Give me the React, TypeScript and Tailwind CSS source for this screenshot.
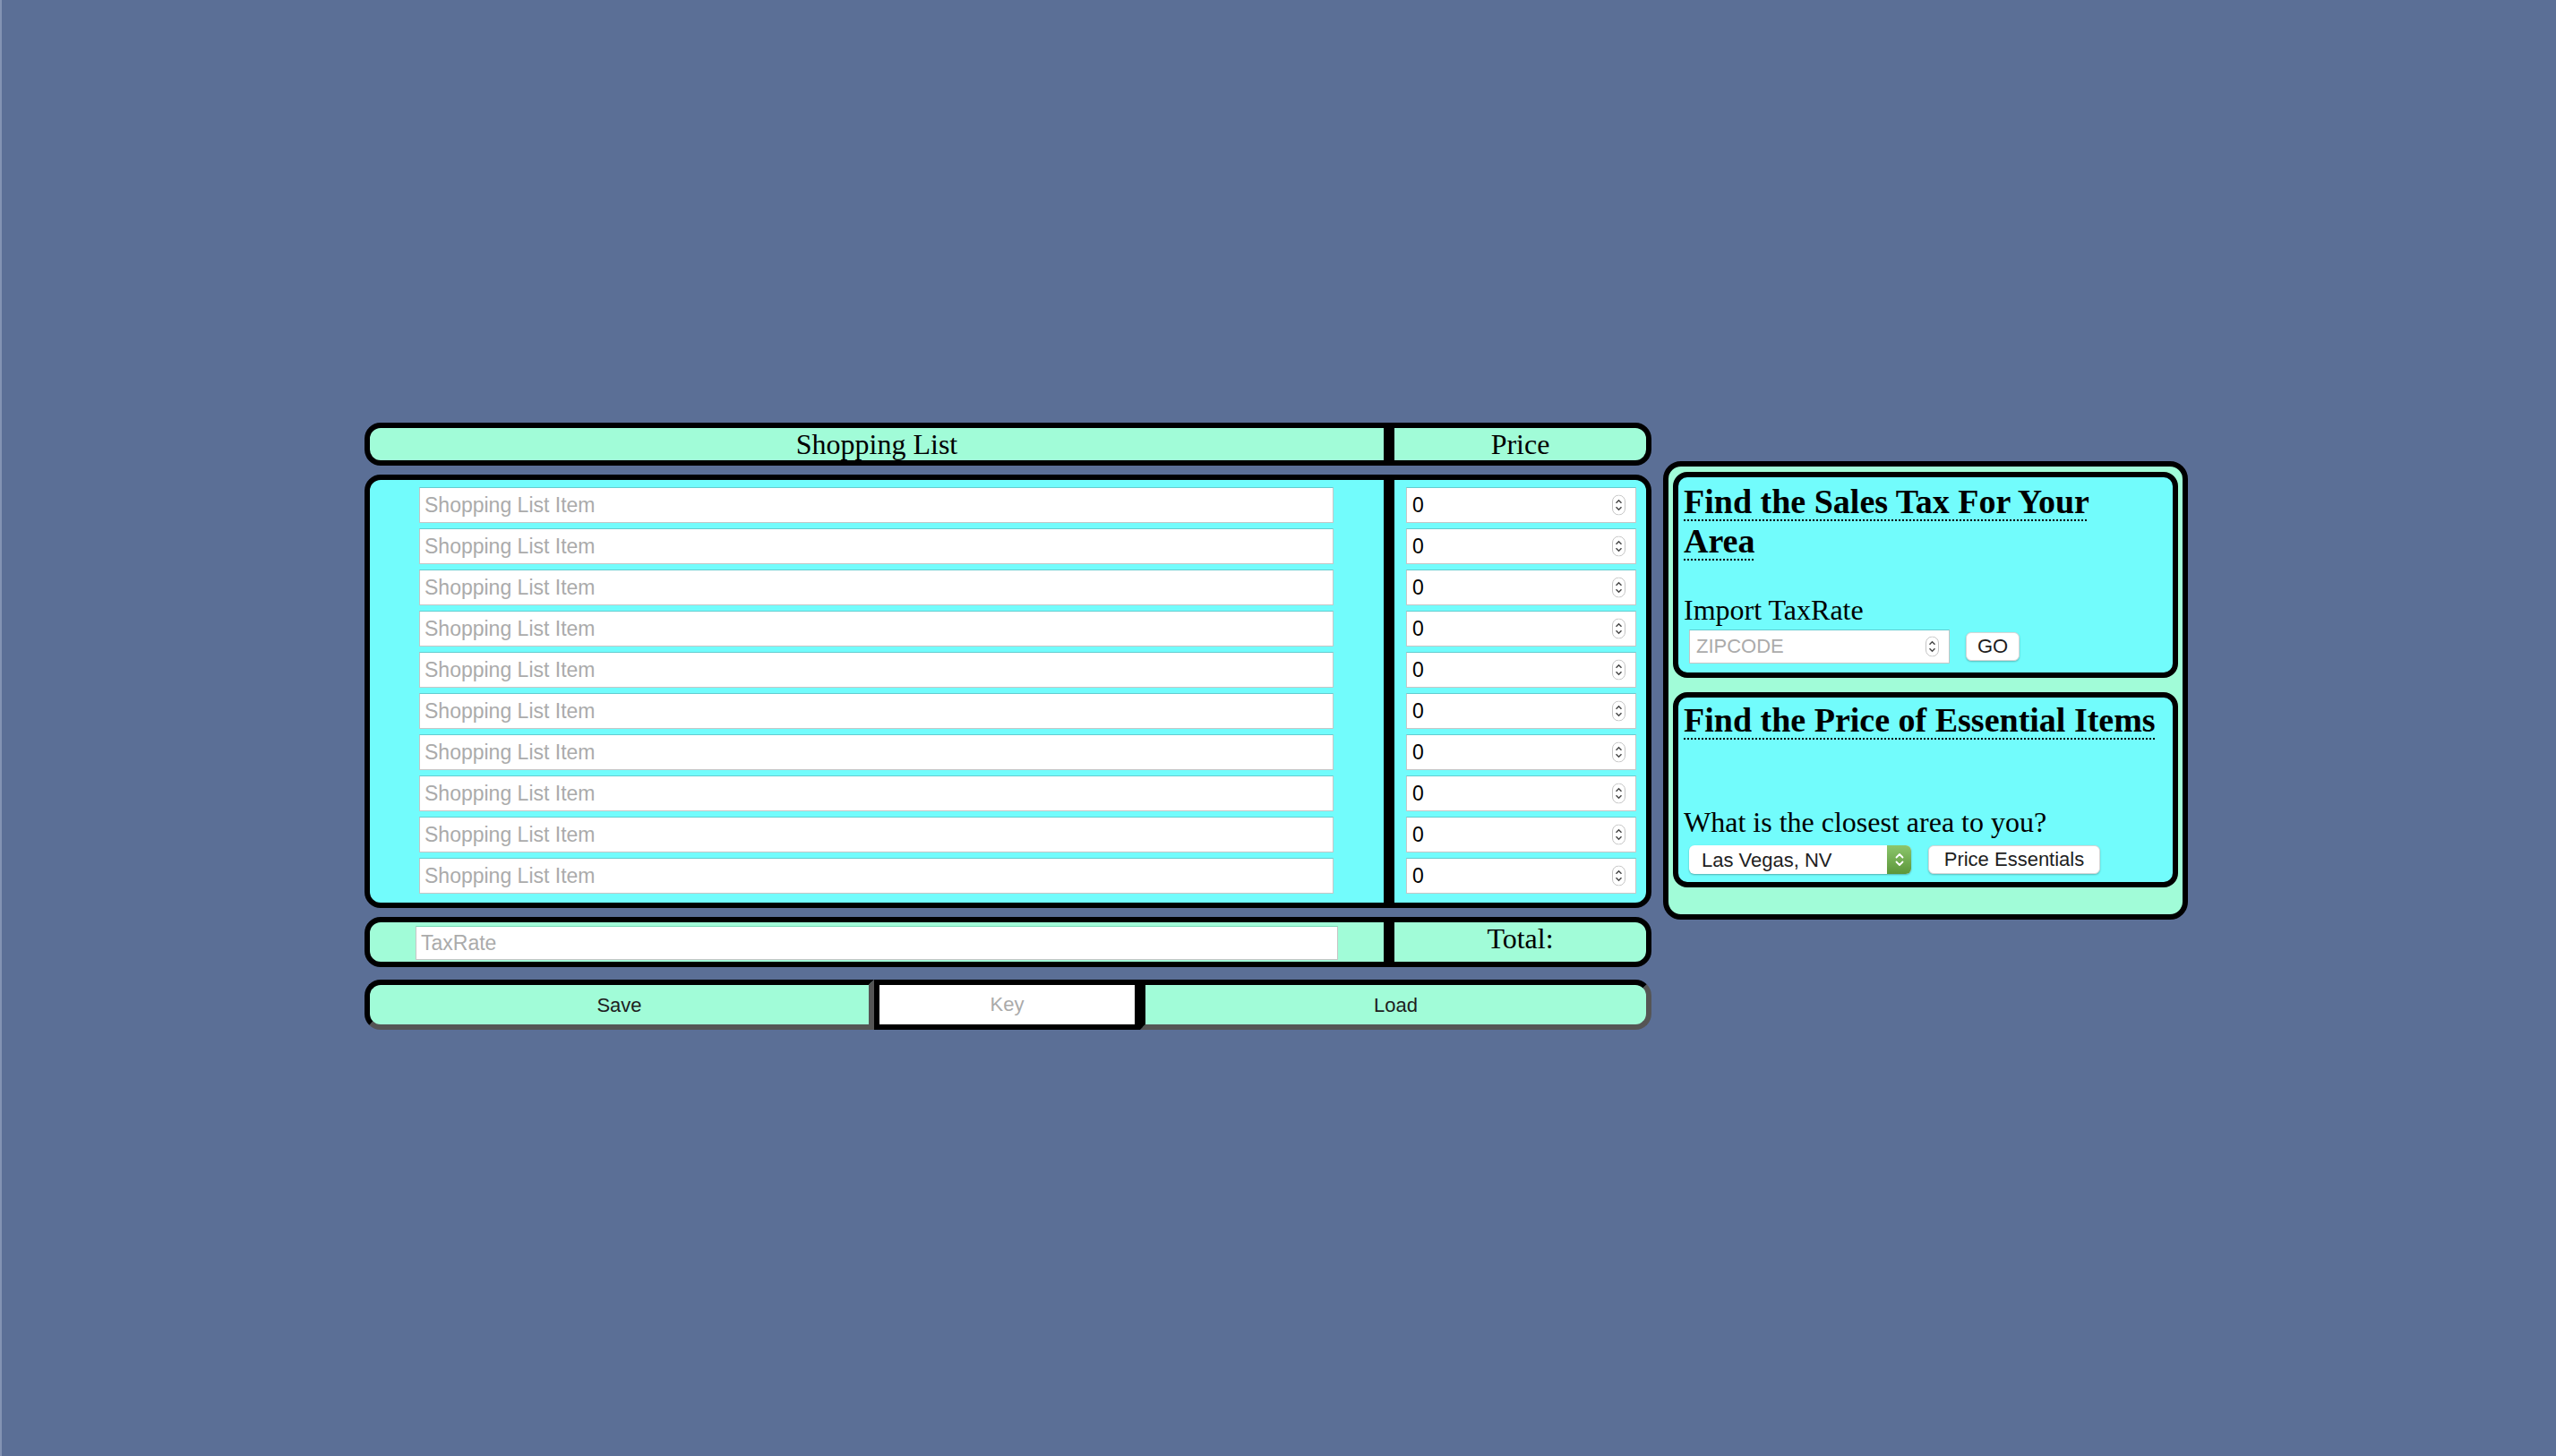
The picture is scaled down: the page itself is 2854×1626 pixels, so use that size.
import React from "react";

function Spinner() {
  return (
    <svg
      width="15"
      height="23"
      viewBox="0 0 15 23"
      className="pointer-events-none absolute right-[12px] top-1/2 -translate-y-1/2"
    >
      <rect x="0.5" y="0.5" width="14" height="22" rx="7" fill="#ffffff" stroke="#c4c4c4" />
      <path d="M4.5 9.2 L7.5 6.2 L10.5 9.2" stroke="#4a4a4a" strokeWidth="1.5" fill="none" />
      <path d="M4.5 13.8 L7.5 16.8 L10.5 13.8" stroke="#4a4a4a" strokeWidth="1.5" fill="none" />
    </svg>
  );
}

const rows = Array.from({ length: 10 }, (_, i) => i);

export default function App() {
  return (
    <div className="min-h-screen w-full bg-[#5b6f96] border-l-2 border-[#8393b3] pl-[405px] pt-[472px] font-['Liberation_Sans',Arial,sans-serif]">
      <div className="flex items-start gap-[13px]">
        {/* Left column */}
        <div className="flex w-[1437px] flex-col">
          {/* Header */}
          <div className="flex h-[48px]">
            <div className="w-[1144px] rounded-l-[18px] border-[6px] border-black bg-[#a1fcd8] text-center font-['Liberation_Serif',serif] text-[32px] leading-[36px] text-black">
              Shopping List
            </div>
            <div className="flex-1 rounded-r-[18px] border-[6px] border-black bg-[#a1fcd8] text-center font-['Liberation_Serif',serif] text-[32px] leading-[36px] text-black">
              Price
            </div>
          </div>

          {/* Body */}
          <div className="mt-[10px] flex h-[484px]">
            <div className="w-[1144px] rounded-l-[18px] border-[6px] border-black bg-[#72fcfc] pl-[55px] pr-[56px] pt-[8px]">
              <div className="flex flex-col gap-[6px]">
                {rows.map((i) => (
                  <input
                    key={i}
                    type="text"
                    placeholder="Shopping List Item"
                    className="block h-[40px] w-full border border-[#c6c6c6] border-t-[#63cdd0] bg-white pl-[5px] text-[23px] text-black outline-none placeholder:text-[#ababab]"
                  />
                ))}
              </div>
            </div>
            <div className="flex-1 rounded-r-[18px] border-[6px] border-black bg-[#72fcfc] pl-[13px] pr-[11px] pt-[8px]">
              <div className="flex flex-col gap-[6px]">
                {rows.map((i) => (
                  <div key={i} className="relative h-[40px]">
                    <input
                      type="text"
                      defaultValue="0"
                      className="block h-full w-full border border-[#c6c6c6] border-t-[#63cdd0] bg-white pl-[6px] text-[23px] text-black outline-none"
                    />
                    <Spinner />
                  </div>
                ))}
              </div>
            </div>
          </div>

          {/* Tax row */}
          <div className="mt-[10px] flex h-[56px]">
            <div className="w-[1144px] rounded-l-[18px] border-[6px] border-black bg-[#a1fcd8] pl-[51px] pt-[4px]">
              <input
                type="text"
                placeholder="TaxRate"
                className="block h-[38px] w-[1030px] border border-[#c6c6c6] border-t-[#74d9b5] bg-white pl-[5px] text-[23px] text-black outline-none placeholder:text-[#ababab]"
              />
            </div>
            <div className="flex-1 rounded-r-[18px] border-[6px] border-black bg-[#a1fcd8] text-center font-['Liberation_Serif',serif] text-[32px] leading-[36px] text-black">
              Total:
            </div>
          </div>

          {/* Buttons row */}
          <div className="mt-[14px] flex h-[56px]">
            <button className="h-full w-[569px] rounded-l-[18px] border-[6px] border-t-black border-l-black border-r-[#555555] border-b-[#555555] bg-[#a1fcd8] text-[22px] text-[#1e1e1e]">
              Save
            </button>
            <input
              type="text"
              placeholder="Key"
              className="block h-full w-[297px] border-[6px] border-black bg-white text-center text-[22px] text-black outline-none placeholder:text-[#aaaaaa]"
            />
            <button className="h-full flex-1 rounded-r-[18px] border-[6px] border-t-black border-l-black border-r-[#555555] border-b-[#555555] bg-[#a1fcd8] text-[22px] text-[#1e1e1e]">
              Load
            </button>
          </div>
        </div>

        {/* Right panel */}
        <div className="mt-[43px] flex h-[512px] w-[586px] flex-col gap-[16px] rounded-[20px] border-[6px] border-black bg-[#a1fcd8] px-[5px] pt-[6px]">
          <div className="h-[230px] rounded-[16px] border-[6px] border-black bg-[#72fcfc] px-[6px] pt-[5px]">
            <h2 className="max-w-[500px] font-['Liberation_Serif',serif] text-[38px] font-bold leading-[44px] text-black underline decoration-dotted decoration-2 underline-offset-[7px]">
              Find the Sales Tax For Your Area
            </h2>
            <div className="mt-[37px] font-['Liberation_Serif',serif] text-[32px] leading-[37px] text-black">
              Import TaxRate
            </div>
            <div className="mt-[3px] flex items-center gap-[18px] pl-[6px]">
              <div className="relative h-[38px] w-[291px]">
                <input
                  type="text"
                  placeholder="ZIPCODE"
                  className="block h-full w-full border border-[#c6c6c6] border-t-[#63cdd0] bg-white pl-[7px] text-[22px] text-black outline-none placeholder:text-[#ababab]"
                />
                <Spinner />
              </div>
              <button className="h-[32px] w-[60px] rounded-[6px] border border-[#d6d6d6] bg-white text-[22px] leading-none text-[#1e1e1e] shadow-[0_1px_2px_rgba(0,0,0,0.25)]">
                GO
              </button>
            </div>
          </div>

          <div className="h-[218px] rounded-[16px] border-[6px] border-black bg-[#72fcfc] px-[6px] pt-[3px]">
            <h2 className="font-['Liberation_Serif',serif] text-[38px] font-bold leading-[44px] text-black underline decoration-dotted decoration-2 underline-offset-[7px]">
              Find the Price of Essential Items
            </h2>
            <div className="mt-[74px] font-['Liberation_Serif',serif] text-[32px] leading-[37px] text-black">
              What is the closest area to you?
            </div>
            <div className="mt-[7px] flex items-center gap-[19px] pl-[6px]">
              <div className="relative h-[32px] w-[248px] rounded-[6px] bg-white shadow-[0_1px_2px_rgba(0,0,0,0.3)]">
                <select
                  defaultValue="Las Vegas, NV"
                  className="h-full w-full appearance-none rounded-[6px] bg-transparent pl-[14px] text-[22px] text-[#1e1e1e] outline-none"
                >
                  <option>Las Vegas, NV</option>
                </select>
                <div className="pointer-events-none absolute right-0 top-0 flex h-full w-[27px] items-center justify-center rounded-r-[6px] bg-gradient-to-b from-[#8cc66c] to-[#5c9639]">
                  <svg width="12" height="20" viewBox="0 0 12 20">
                    <path d="M2.5 7.5 L6 4 L9.5 7.5" stroke="#ffffff" strokeWidth="1.8" fill="none" strokeLinecap="round" strokeLinejoin="round" />
                    <path d="M2.5 12.5 L6 16 L9.5 12.5" stroke="#ffffff" strokeWidth="1.8" fill="none" strokeLinecap="round" strokeLinejoin="round" />
                  </svg>
                </div>
              </div>
              <button className="h-[32px] w-[192px] rounded-[6px] border border-[#d6d6d6] bg-white text-[22px] leading-none text-[#1e1e1e] shadow-[0_1px_2px_rgba(0,0,0,0.25)]">
                Price Essentials
              </button>
            </div>
          </div>
        </div>
      </div>
    </div>
  );
}
